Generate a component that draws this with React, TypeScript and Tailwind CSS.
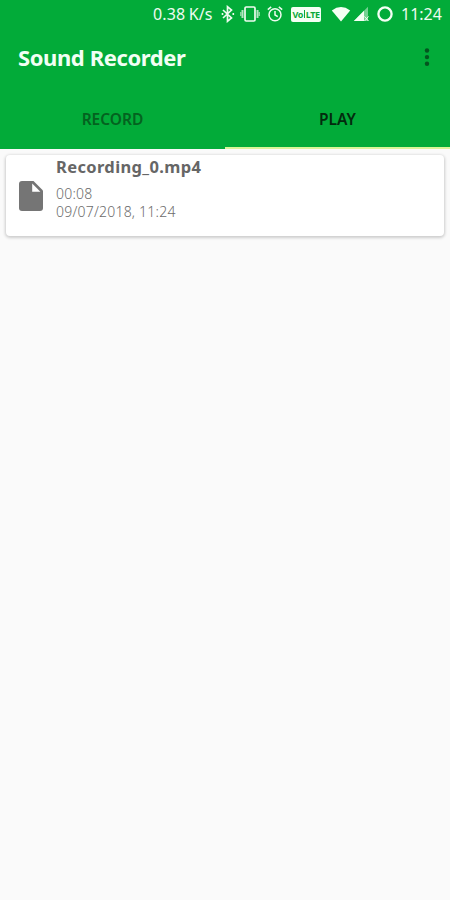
import React from "react";

function StatusBar() {
  return (
    <div className="flex h-[28px] items-center text-[#effbf0]">
      <span className="ml-[153px] w-[60px] whitespace-nowrap text-[16px] leading-[28px] tracking-[0.150px] [word-spacing:-1px]">0.38 K/s</span>
      <svg className="ml-[8px]" width="14" height="18" viewBox="0 0 14 18" fill="none" stroke="currentColor" strokeWidth="1.700">
        <path d="M2 5l8.500 8L6.500 16.300V1.700L10.500 5L2 13" />
        <path d="M.7 9h1.600M11.500 9h1.600" strokeWidth="2" />
      </svg>
      <svg className="ml-[5px]" width="20" height="18" viewBox="0 0 20 18" fill="none" stroke="currentColor">
        <rect x="5" y="2" width="10" height="14" rx="1.200" strokeWidth="1.700" />
        <path d="M2.500 5v8M17.500 5v8" strokeWidth="2" opacity=".75" />
        <path d="M.7 7v4M19.300 7v4" strokeWidth="1.400" opacity=".55" />
      </svg>
      <svg className="ml-[7px]" width="16" height="18" viewBox="0 0 16 18" fill="none" stroke="currentColor" strokeWidth="1.500">
        <circle cx="8" cy="9.700" r="6" />
        <path d="M.8 4.600L4.200 1.800M15.200 4.600L11.800 1.800M8 6v4l2.800 1.700" />
      </svg>
      <span className="ml-[8px] flex h-[15px] w-[30px] items-center justify-center rounded-[2px] bg-[#f4fff4] text-[9px] font-bold leading-none tracking-[-0.5px] text-[#0aa83a]">
        Vo<span className="mx-[1px] h-[8px] w-[1px] bg-[#0aa83a]" />LTE
      </span>
      <svg className="ml-[10px]" width="20" height="16" viewBox="0 0 20 16" fill="#f4fff4">
        <path d="M.8 4.400Q10-2.400 19.200 4.400L10 15.500Z" />
      </svg>
      <svg className="ml-[2px]" width="16" height="16" viewBox="0 0 16 16">
        <path d="M15 .8V15H.8Z" fill="#fff" opacity=".45" />
        <path d="M11 4.800V15H.8Z" fill="#f4fff4" />
        <path d="M11.500 10.500l4 4.500M15.500 10.500l-4 4.500" stroke="#f4fff4" strokeWidth="1" />
      </svg>
      <svg className="ml-[8px]" width="16" height="16" viewBox="0 0 16 16" fill="none" stroke="#f4fff4">
        <circle cx="8" cy="8" r="6.600" strokeWidth="2.300" />
      </svg>
      <span className="ml-[8px] whitespace-nowrap text-[16px] leading-[28px]">11:24</span>
    </div>
  );
}

function Header() {
  return (
    <header className="h-[149px] bg-[#02ab39]">
      <StatusBar />
      <div className="flex h-[62px] items-center justify-between pl-[18px] pr-[19.500px]">
        <h1 className="-mt-[4px] whitespace-nowrap text-[22px] font-bold leading-[30px] tracking-[-0.400px] text-[#f2fff4]">Sound Recorder</h1>
        <svg className="-mt-[4px]" width="8" height="20" viewBox="0 0 8 20" fill="#04551f">
          <circle cx="4" cy="3.500" r="2.200" />
          <circle cx="4" cy="10.100" r="2.200" />
          <circle cx="4" cy="16.700" r="2.200" />
        </svg>
      </div>
      <nav className="grid h-[59px] grid-cols-2 text-center text-[15.500px] font-semibold leading-[58px]">
        <div className="text-[#04621f]">RECORD</div>
        <div className="h-[59px] border-b-[2px] border-[#d9f59a] text-[#032b0e]">PLAY</div>
      </nav>
    </header>
  );
}

function RecordingCard() {
  return (
    <article className="mx-[6px] mt-[6px] flex h-[81px] rounded-[4px] bg-white shadow-[0_1px_3px_1px_rgba(0,0,0,0.18)]">
      <svg className="ml-[13px] mt-[26px]" width="24" height="30" viewBox="0 0 24 30">
        <path d="M3 0h11.500L24 9.500V27a3 3 0 0 1-3 3H3a3 3 0 0 1-3-3V3a3 3 0 0 1 3-3Z" fill="#757575" />
        <path d="M13.200 2.600V10.800H21.400Z" fill="#fff" />
      </svg>
      <div className="ml-[13px] whitespace-nowrap">
        <div className="h-[30px] text-[16.500px] font-bold leading-[23px] tracking-[0.360px] text-[#666]">Recording_0.mp4</div>
        <div className="text-[14px] font-light leading-[18px] tracking-[0.220px] text-[#6c6c6c]">00:08</div>
        <div className="text-[14px] font-light leading-[18px] tracking-[0.220px] text-[#6c6c6c]">09/07/2018, 11:24</div>
      </div>
    </article>
  );
}

export default function App() {
  return (
    <main className="h-[900px] w-[450px] overflow-hidden bg-[#fafafa] font-['Noto_Sans',sans-serif]">
      <Header />
      <RecordingCard />
    </main>
  );
}
